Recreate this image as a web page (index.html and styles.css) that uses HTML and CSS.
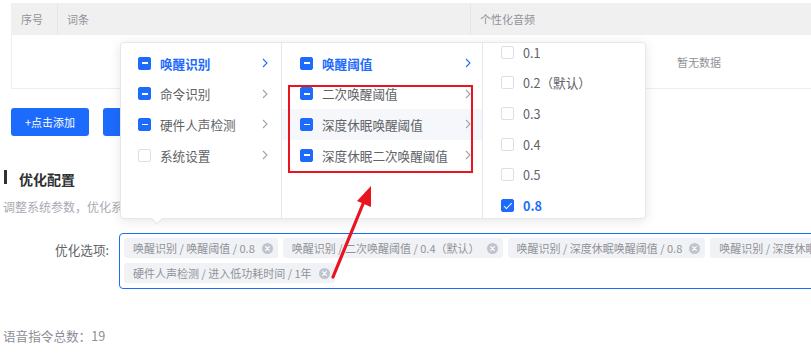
FILE: index.html
```html
<!DOCTYPE html>
<html lang="zh-CN">
<head>
<meta charset="utf-8">
<title>优化配置</title>
<link rel="stylesheet" href="styles.css">
</head>
<body>
<div class="page">
  <div class="table">
    <div class="thead">
      <div class="th c-idx">序号</div>
      <div class="th c-word">词条</div>
      <div class="th c-audio">个性化音频</div>
    </div>
    <div class="tbody"><span class="empty">暂无数据</span></div>
  </div>

  <div class="actions">
    <button class="btn">+点击添加</button>
    <button class="btn">批量导入</button>
  </div>

  <h3 class="sec-title">优化配置</h3>
  <p class="sec-desc">调整系统参数，优化系统表现与唤醒效果</p>

  <div class="form-row">
    <label class="form-label">优化选项:</label>
    <div class="tag-input">
      <span class="tag">唤醒识别 / 唤醒阈值 / 0.8<svg class="tag-close" viewBox="0 0 12 12"><circle cx="6" cy="6" r="6" fill="#c0c4cc"/><path d="M4 4l4 4M8 4l-4 4" stroke="#fff" stroke-width="1.3" stroke-linecap="round"/></svg></span>
      <span class="tag">唤醒识别 / 二次唤醒阈值 / 0.4（默认）<svg class="tag-close" viewBox="0 0 12 12"><circle cx="6" cy="6" r="6" fill="#c0c4cc"/><path d="M4 4l4 4M8 4l-4 4" stroke="#fff" stroke-width="1.3" stroke-linecap="round"/></svg></span>
      <span class="tag">唤醒识别 / 深度休眠唤醒阈值 / 0.8<svg class="tag-close" viewBox="0 0 12 12"><circle cx="6" cy="6" r="6" fill="#c0c4cc"/><path d="M4 4l4 4M8 4l-4 4" stroke="#fff" stroke-width="1.3" stroke-linecap="round"/></svg></span>
      <span class="tag">唤醒识别 / 深度休眠二次唤醒阈值 / 0.8<svg class="tag-close" viewBox="0 0 12 12"><circle cx="6" cy="6" r="6" fill="#c0c4cc"/><path d="M4 4l4 4M8 4l-4 4" stroke="#fff" stroke-width="1.3" stroke-linecap="round"/></svg></span>
      <span class="tag">硬件人声检测 / 进入低功耗时间 / 1年<svg class="tag-close" viewBox="0 0 12 12"><circle cx="6" cy="6" r="6" fill="#c0c4cc"/><path d="M4 4l4 4M8 4l-4 4" stroke="#fff" stroke-width="1.3" stroke-linecap="round"/></svg></span>
    </div>
  </div>

  <p class="total">语音指令总数：19</p>

  <div class="cascader">
    <div class="col col-1">
      <ul class="list">
        <li class="item active"><span class="cb ind"></span><span class="label">唤醒识别</span><svg class="chev" viewBox="0 0 6 10"><path d="M1 1l4 4-4 4" fill="none" stroke="currentColor" stroke-width="1.1"/></svg></li>
        <li class="item"><span class="cb ind"></span><span class="label">命令识别</span><svg class="chev" viewBox="0 0 6 10"><path d="M1 1l4 4-4 4" fill="none" stroke="currentColor" stroke-width="1.1"/></svg></li>
        <li class="item"><span class="cb ind"></span><span class="label">硬件人声检测</span><svg class="chev" viewBox="0 0 6 10"><path d="M1 1l4 4-4 4" fill="none" stroke="currentColor" stroke-width="1.1"/></svg></li>
        <li class="item"><span class="cb"></span><span class="label">系统设置</span><svg class="chev" viewBox="0 0 6 10"><path d="M1 1l4 4-4 4" fill="none" stroke="currentColor" stroke-width="1.1"/></svg></li>
      </ul>
    </div>
    <div class="col col-2">
      <ul class="list">
        <li class="item active"><span class="cb ind"></span><span class="label">唤醒阈值</span><svg class="chev" viewBox="0 0 6 10"><path d="M1 1l4 4-4 4" fill="none" stroke="currentColor" stroke-width="1.1"/></svg></li>
        <li class="item"><span class="cb ind"></span><span class="label">二次唤醒阈值</span><svg class="chev" viewBox="0 0 6 10"><path d="M1 1l4 4-4 4" fill="none" stroke="currentColor" stroke-width="1.1"/></svg></li>
        <li class="item hover"><span class="cb ind"></span><span class="label">深度休眠唤醒阈值</span><svg class="chev" viewBox="0 0 6 10"><path d="M1 1l4 4-4 4" fill="none" stroke="currentColor" stroke-width="1.1"/></svg></li>
        <li class="item"><span class="cb ind"></span><span class="label">深度休眠二次唤醒阈值</span><svg class="chev" viewBox="0 0 6 10"><path d="M1 1l4 4-4 4" fill="none" stroke="currentColor" stroke-width="1.1"/></svg></li>
      </ul>
    </div>
    <div class="col col-3">
      <ul class="list scrolled">
        <li class="item"><span class="cb"></span><span class="label">0.1</span></li>
        <li class="item"><span class="cb"></span><span class="label">0.2（默认）</span></li>
        <li class="item"><span class="cb"></span><span class="label">0.3</span></li>
        <li class="item"><span class="cb"></span><span class="label">0.4</span></li>
        <li class="item"><span class="cb"></span><span class="label">0.5</span></li>
        <li class="item active"><span class="cb chk"></span><span class="label">0.8</span></li>
      </ul>
    </div>
    <span class="popper-arrow"></span>
  </div>

  <div class="annot-box"></div>
  <svg class="annot-arrow" viewBox="0 0 811 353">
    <path d="M333 277 L365 199" stroke="#e8141f" stroke-width="3.2" stroke-linecap="round" fill="none"/>
    <polygon points="371,186 357,201 371,207" fill="#e8141f"/>
  </svg>
</div>
</body>
</html>
```

FILE: styles.css
```css
* { box-sizing: border-box; }
html, body { margin: 0; padding: 0; }
body {
  width: 811px;
  height: 353px;
  overflow: hidden;
  background: #fff;
  font-family: "Noto Sans CJK SC", "Noto Sans", sans-serif;
  color: #606266;
}
.page {
  position: relative;
  width: 811px;
  height: 353px;
  padding-top: 3px;
}

/* table */
.table {
  margin-left: 11px;
  width: 1376px;
  border: 1px solid #ebeef5;
  border-top: 0;
}
.thead {
  display: flex;
  height: 32px;
  background: #f0f0f0;
  font-size: 11px;
  color: #909399;
}
.th {
  display: flex;
  align-items: center;
  padding-left: 9px;
  border-right: 1px solid #e6e6e6;
}
.c-idx { width: 46px; }
.c-word { width: 413px; }
.c-audio { flex: 1; border-right: 0; }
.tbody {
  height: 53px;
  display: flex;
  align-items: center;
  justify-content: center;
  font-size: 11px;
  color: #909399;
}

/* buttons */
.actions {
  display: flex;
  gap: 14px;
  margin: 19px 0 0 11px;
}
.btn {
  width: 78px;
  height: 28px;
  border: 0;
  border-radius: 3px;
  background: #1d6bfc;
  color: #fff;
  font-family: inherit;
  font-size: 11px;
  padding: 0;
}

/* section */
.sec-title {
  display: flex;
  align-items: center;
  margin: 33px 0 0 4px;
  height: 20px;
  font-size: 14px;
  font-weight: 700;
  color: #303133;
  line-height: 20px;
}
.sec-title::before {
  content: "";
  width: 3px;
  height: 14px;
  margin-top: -4px;
  margin-right: 12px;
  background: #303133;
}
.sec-desc {
  margin: 9px 0 0 3px;
  font-size: 12px;
  line-height: 18px;
  color: #a8abb2;
}

/* form */
.form-row {
  display: flex;
  align-items: flex-start;
  margin-top: 17px;
}
.form-label {
  width: 109px;
  text-align: right;
  font-size: 12.6px;
  line-height: 34px;
  color: #606266;
  flex-shrink: 0;
}
.tag-input {
  margin-left: 10px;
  width: 840px;
  flex-shrink: 0;
  border: 1px solid #1d6bfc;
  border-radius: 4px;
  padding: 4px 4px 5px;
  display: flex;
  flex-wrap: wrap;
  gap: 5px 5px;
}
.tag {
  display: inline-flex;
  align-items: center;
  height: 20px;
  padding: 0 5px 0 9px;
  background: #f0f2f5;
  border-radius: 3px;
  font-size: 11px;
  color: #909399;
  white-space: nowrap;
}
.tag-close {
  width: 11px;
  height: 11px;
  margin-left: 7px;
}
.total {
  margin: 38px 0 0 3px;
  font-size: 12.6px;
  line-height: 18px;
  color: #8c8f96;
}

/* cascader panel */
.cascader {
  position: absolute;
  left: 120px;
  top: 42px;
  width: 526px;
  height: 177px;
  display: flex;
  background: #fff;
  border: 1px solid #e4e7ed;
  border-radius: 4px;
  box-shadow: 0 2px 12px rgba(0, 0, 0, 0.1);
  z-index: 5;
}
.col {
  height: 100%;
  overflow: hidden;
  border-right: 1px solid #e4e7ed;
}
.col-1 { width: 161px; }
.col-2 { width: 201px; }
.col-3 { flex: 1; border-right: 0; }
.list {
  list-style: none;
  margin: 0;
  padding: 5px 0;
}
.list.scrolled {
  padding-top: 0;
  margin-top: -6px;
}
.item {
  height: 30.6px;
  display: flex;
  align-items: center;
  padding: 0 13px 0 17px;
  font-size: 12.6px;
  color: #606266;
  white-space: nowrap;
}
.col-2 .item { padding-left: 18px; padding-right: 11px; }
.col-3 .item { padding-left: 18px; }
.item.hover { background: #f5f7fa; }
.item.active { color: #1d6bfc; font-weight: 700; }
.label { flex: 0 0 auto; }
.chev {
  width: 6px;
  height: 10px;
  margin-left: auto;
  color: #a0a3a9;
}
.item.active .chev { color: #1d6bfc; }

.cb {
  position: relative;
  width: 13px;
  height: 13px;
  margin-right: 9px;
  flex-shrink: 0;
  border: 1px solid #dcdfe6;
  border-radius: 2px;
  background: #fff;
}
.cb.ind, .cb.chk {
  background: #1d6bfc;
  border-color: #1d6bfc;
}
.cb.ind::after {
  content: "";
  position: absolute;
  left: 2.5px;
  right: 2.5px;
  top: 4.7px;
  height: 1.6px;
  background: #fff;
}
.cb.chk::after {
  content: "";
  position: absolute;
  left: 3.6px;
  top: 1px;
  width: 3px;
  height: 6.5px;
  border: 1px solid #fff;
  border-left: 0;
  border-top: 0;
  transform: rotate(45deg);
}

.popper-arrow {
  position: absolute;
  left: 30px;
  bottom: -7px;
  width: 0;
  height: 0;
  border-left: 6px solid transparent;
  border-right: 6px solid transparent;
  border-top: 6px solid #e8eaee;
}
.popper-arrow::after {
  content: "";
  position: absolute;
  left: -5px;
  top: -7px;
  border-left: 5px solid transparent;
  border-right: 5px solid transparent;
  border-top: 5px solid #fff;
}

/* annotations */
.annot-box {
  position: absolute;
  left: 288px;
  top: 85px;
  width: 185px;
  height: 88px;
  border: 2px solid #e8141f;
  z-index: 6;
}
.annot-arrow {
  position: absolute;
  left: 0;
  top: 0;
  width: 811px;
  height: 353px;
  pointer-events: none;
  z-index: 7;
}
```
